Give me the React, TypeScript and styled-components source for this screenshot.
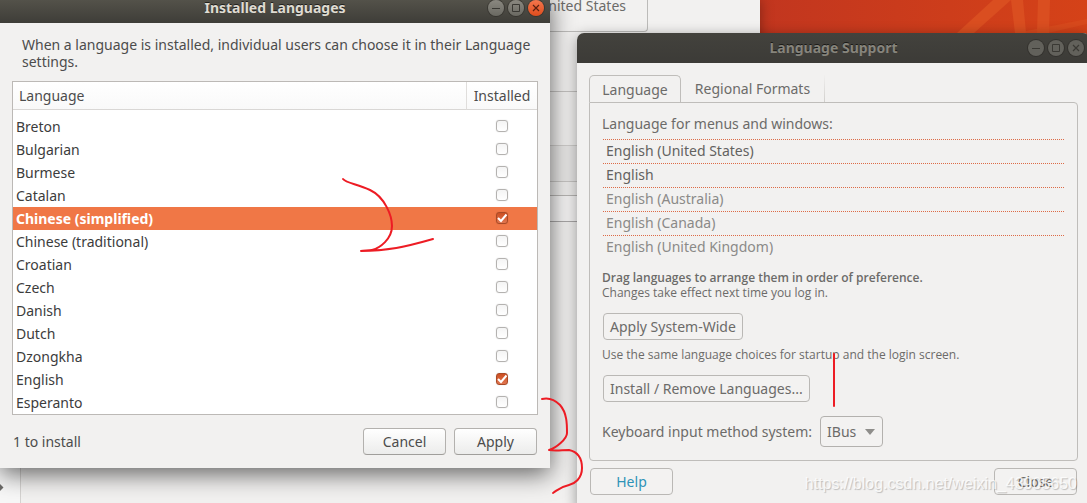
import React, { useState } from "react";
import styled, { createGlobalStyle, css } from "styled-components";

const GlobalStyle = createGlobalStyle`
  *, *::before, *::after { box-sizing: border-box; }
  html, body { margin: 0; height: 100%; overflow: hidden; }
  body {
    font-family: "Noto Sans", "Open Sans", sans-serif;
    font-size: 14px;
    line-height: 17px;
    color: #4c4c4c;
  }
  button, input, select { font: inherit; color: inherit; margin: 0; }
`;

const Desktop = styled.main`
  position: relative;
  min-height: 100vh;
  overflow: hidden;
  background: #c93a1b;
`;

const Wallpaper = styled.svg`
  position: absolute;
  top: 0;
  right: 0;
`;

/* Settings window behind the dialogs */
const SettingsWindow = styled.section`
  position: absolute;
  top: 0;
  bottom: 0;
  left: 0;
  width: 760px;
  display: flex;
  background: #f2f1f0;
  box-shadow: 0 0 12px rgba(0, 0, 0, 0.35);
`;

const SettingsNav = styled.nav`
  width: 21px;
  display: flex;
  flex-direction: column;
  justify-content: flex-end;
  padding-bottom: 8px;
  background: #f7f7f7;
  border-right: 1px solid #d5d3d1;
`;

const SettingsBody = styled.div`
  flex: 1;
  display: flex;
  flex-direction: column;
  align-items: flex-start;
`;

const RegionBox = styled.div`
  width: 627px;
  height: 32px;
  padding: 0 21px;
  line-height: 11px;
  text-align: right;
  color: #6c6b69;
  border: 1px solid #bcbbb9;
  border-top: 0;
  border-radius: 0 0 4px 0;
`;

const Band = styled.div<{ $height: number; $bg: string; $line: string }>`
  width: 627px;
  height: ${(p) => p.$height}px;
  background: ${(p) => p.$bg};
  border-bottom: 1px solid ${(p) => p.$line};
`;

/* Window chrome */
const Dialog = styled.section<{ $focused?: boolean }>`
  position: absolute;
  display: flex;
  flex-direction: column;
  background: #f2f1f0;
  border-radius: 7px 7px 0 0;
  ${(p) =>
    p.$focused
      ? css`
          top: -7px;
          left: 0;
          width: 550px;
          box-shadow: 0 6px 24px rgba(0, 0, 0, 0.6);
        `
      : css`
          top: 33px;
          left: 577px;
          right: -3px;
          min-height: 475px;
          color: #6c6b69;
          box-shadow: 0 3px 14px rgba(0, 0, 0, 0.4);
        `}
`;

const TitleBar = styled.header<{ $focused?: boolean }>`
  display: grid;
  grid-template-columns: 1fr auto 1fr;
  align-items: center;
  height: 30px;
  padding: 0 6px;
  border-radius: 7px 7px 0 0;
  background: ${(p) =>
    p.$focused
      ? "linear-gradient(#5a584f, #3e3d38)"
      : "linear-gradient(#43423d, #3c3b37)"};
  color: ${(p) => (p.$focused ? "#dfdbd2" : "#86847c")};
  text-shadow: 0 -1px 0 rgba(0, 0, 0, 0.6);
`;

const Title = styled.h1`
  grid-column: 2;
  margin: 0;
  font-size: 14px;
  line-height: 20px;
  font-weight: 700;
`;

const WindowButtons = styled.div`
  display: flex;
  justify-content: flex-end;
  gap: 4px;
`;

const WindowButton = styled.button<{ $tone: "dim" | "normal" | "close" }>`
  display: grid;
  place-items: center;
  width: 16px;
  height: 16px;
  padding: 0;
  border: 0;
  border-radius: 50%;
  color: ${(p) => (p.$tone === "close" ? "#5a2010" : "#3a3934")};
  background: ${(p) =>
    ({
      dim: "#62615b",
      normal: "linear-gradient(#8a8880, #6a6962)",
      close: "linear-gradient(#f4764d, #de4d1d)",
    })[p.$tone]};
  box-shadow: 0 0 0 1px rgba(40, 38, 34, 0.5);
`;

const Intro = styled.p`
  margin: 0;
  padding: 13px 16px 11px 22px;
`;

const ListFrame = styled.div`
  margin: 0 12px;
  background: #fff;
  border: 1px solid #bcb9b6;
`;

const LanguageTable = styled.table`
  width: 100%;
  border-collapse: separate;
  border-spacing: 0;
  color: #3c3c3c;
  th {
    height: 28px;
    padding: 0 6px;
    font-weight: 400;
    text-align: left;
    color: #4c4c4c;
    background: linear-gradient(#fff, #f9f9f9);
    border-bottom: 1px solid #d9d7d5;
  }
  th + th {
    width: 71px;
    padding: 0;
    text-align: center;
    border-left: 1px solid #e0dedc;
  }
  tbody::before {
    content: "";
    display: block;
    height: 5px;
  }
`;

const LanguageRow = styled.tr<{ $selected: boolean }>`
  ${(p) =>
    p.$selected &&
    css`
      background: #f07746;
      color: #fff;
      font-weight: 700;
    `}
  td {
    height: 23px;
    padding: 0 3px;
  }
  td + td {
    padding: 0;
    text-align: center;
  }
`;

const CheckLabel = styled.span`
  display: grid;
  place-items: center;
  height: 23px;
  padding-bottom: 1px;
  & > * {
    grid-area: 1 / 1;
  }
  svg {
    pointer-events: none;
  }
`;

const Check = styled.input`
  appearance: none;
  width: 12px;
  height: 12px;
  border: 1px solid #b4b2b0;
  border-radius: 3px;
  background: linear-gradient(#f4f4f4, #fff);
  box-shadow: 0 0 1px rgba(0, 0, 0, 0.25);
  &:checked {
    border-color: #a94a26;
    background: linear-gradient(#cc4f22, #e07650);
  }
`;

const Footer = styled.footer`
  display: flex;
  align-items: center;
  gap: 8px;
  padding: 13px 13px;
`;

const Status = styled.span`
  flex: 1;
`;

const Button = styled.button<{ $flat?: boolean; $wide?: boolean }>`
  height: 27px;
  padding: 0 6px;
  ${(p) => p.$wide && "width: 83px;"}
  border: 1px solid #b3b1ae;
  border-bottom-color: #a09e9b;
  border-radius: 4px;
  background: ${(p) =>
    p.$flat ? "#f3f2f1" : "linear-gradient(#fff, #ececeb)"};
  ${(p) => p.$flat && "border-color: #bab8b5;"}
`;

const HelpButton = styled(Button)`
  color: #2e93b8;
`;

const Tabs = styled.div`
  display: flex;
  margin: 12px 12px 0;
`;

const Tab = styled.button<{ $active?: boolean }>`
  height: 27px;
  padding: 0 12px;
  border: 1px solid transparent;
  background: transparent;
  ${(p) =>
    p.$active
      ? css`
          width: 92px;
          border-color: #bfbdba;
          border-bottom: 0;
          border-radius: 5px 5px 0 0;
        `
      : css`
          width: 144px;
          border-image: linear-gradient(#f2f1f0, #d0cecb) 1;
          border-width: 0 1px 0 0;
        `}
`;

const Notebook = styled.div`
  display: flex;
  flex-direction: column;
  align-items: flex-start;
  margin: 0 12px;
  padding: 12px 12px 13px;
  border: 1px solid #bfbdba;
  border-radius: 0 4px 4px 4px;
`;

const MenuLanguages = styled.ul`
  align-self: stretch;
  margin: 7px 1px 11px;
  padding: 0;
  list-style: none;
`;

const MenuLanguage = styled.li<{ $dim?: boolean }>`
  height: 24px;
  padding: 0 3px;
  line-height: 22px;
  border-top: 1px dotted #dd6b47;
  color: ${(p) => (p.$dim ? "#8b8a88" : "#636260")};
`;

const Hint = styled.p<{ $strong?: boolean }>`
  margin: 0;
  font-family: "Open Sans", "Noto Sans", sans-serif;
  font-size: 12px;
  line-height: 15px;
  font-weight: ${(p) => (p.$strong ? 600 : 400)};
`;

const ButtonRow = styled.div`
  padding: 13px 1px 7px;
`;

const FieldRow = styled.div`
  display: flex;
  align-items: center;
  gap: 8px;
  padding-top: 7px;
`;

const SelectBox = styled.span`
  display: grid;
  align-items: center;
  & > * {
    grid-area: 1 / 1;
  }
  svg {
    justify-self: end;
    margin-right: 8px;
    pointer-events: none;
  }
`;

const Select = styled.select`
  appearance: none;
  width: 63px;
  height: 31px;
  padding: 0 6px;
  border: 1px solid #b3b1ae;
  border-radius: 4px;
  background: #f3f2f1;
`;

const SupportFooter = styled.footer`
  display: flex;
  justify-content: space-between;
  padding: 7px 13px;
`;

const Ink = styled.svg`
  position: absolute;
  top: 0;
  left: 0;
  pointer-events: none;
`;

const Watermark = styled.span`
  position: absolute;
  right: 10px;
  bottom: 10px;
  font-family: "Liberation Sans", sans-serif;
  font-size: 16px;
  line-height: 18px;
  color: rgba(255, 255, 255, 0.8);
  text-shadow: 1px 1px 1px rgba(0, 0, 0, 0.22);
  pointer-events: none;
`;

const languages = [
  "Breton", "Bulgarian", "Burmese", "Catalan", "Chinese (simplified)",
  "Chinese (traditional)", "Croatian", "Czech", "Danish", "Dutch",
  "Dzongkha", "English", "Esperanto",
];

const menuLanguages = [
  { name: "English (United States)" },
  { name: "English" },
  { name: "English (Australia)", dim: true },
  { name: "English (Canada)", dim: true },
  { name: "English (United Kingdom)", dim: true },
];

function Controls({ focused }: { focused?: boolean }) {
  const tone = focused ? "normal" : "dim";
  return (
    <WindowButtons>
      <WindowButton $tone={tone} aria-label="Minimize">
        <svg width="16" height="16" fill="none" stroke="currentColor">
          <path d="M4 8.500h8" />
        </svg>
      </WindowButton>
      <WindowButton $tone={tone} aria-label="Maximize">
        <svg width="16" height="16" fill="none" stroke="currentColor">
          <path d="M4.500 4.500h7v7h-7z" />
        </svg>
      </WindowButton>
      <WindowButton $tone={focused ? "close" : "dim"} aria-label="Close window">
        <svg width="16" height="16" fill="none" stroke="currentColor" strokeWidth="1.2">
          <path d="M5 5l6 6M11 5l-6 6" />
        </svg>
      </WindowButton>
    </WindowButtons>
  );
}

export default function App() {
  const [installed, setInstalled] = useState(["Chinese (simplified)", "English"]);
  const [selected, setSelected] = useState("Chinese (simplified)");
  const toggle = (name: string) =>
    setInstalled((list) =>
      list.includes(name) ? list.filter((n) => n !== name) : [...list, name],
    );

  return (
    <>
      <GlobalStyle />
      <Desktop>
        <Wallpaper width="327" height="33" viewBox="760 0 327 33" aria-hidden="true">
          <defs>
            <linearGradient id="sky">
              <stop offset="0" stopColor="#c2361f" />
              <stop offset="1" stopColor="#d54218" />
            </linearGradient>
          </defs>
          <path d="M760 0h327v33H760z" fill="url(#sky)" />
          <g fill="#da4e20">
            <path d="M993 0h18l-37 33h-17z" />
            <path d="M1011 0h12l3 33h-11z" />
            <path d="M1038 0h12l-1 33h-12z" />
            <path d="M1026 31l61-12v5l-39 9h-22z" opacity=".6" />
          </g>
        </Wallpaper>

        <SettingsWindow aria-label="Settings">
          <SettingsNav>
            <svg width="4" height="15" aria-hidden="true">
              <path d="M0 4l3.500 3.500L0 11z" fill="#6c6b69" />
            </svg>
          </SettingsNav>
          <SettingsBody>
            <RegionBox>United States</RegionBox>
            <Band $height={60} $bg="#f2f1f0" $line="#c4c2c0" />
            <Band $height={54} $bg="#f2f1f0" $line="#d0cecc" />
            <Band $height={36} $bg="#e9e8e7" $line="#c8c6c4" />
            <Band $height={14} $bg="#efeeed" $line="#b8b6b4" />
            <Band $height={26} $bg="#f6f5f5" $line="#aaa8a8" />
          </SettingsBody>
        </SettingsWindow>

        <Dialog aria-label="Language Support">
          <TitleBar>
            <Title>Language Support</Title>
            <Controls />
          </TitleBar>
          <Tabs role="tablist">
            <Tab role="tab" aria-selected="true" $active>Language</Tab>
            <Tab role="tab" aria-selected="false">Regional Formats</Tab>
          </Tabs>
          <Notebook role="tabpanel">
            <span>Language for menus and windows:</span>
            <MenuLanguages>
              {menuLanguages.map((l) => (
                <MenuLanguage key={l.name} $dim={l.dim}>{l.name}</MenuLanguage>
              ))}
            </MenuLanguages>
            <Hint $strong>Drag languages to arrange them in order of preference.</Hint>
            <Hint>Changes take effect next time you log in.</Hint>
            <ButtonRow>
              <Button $flat>Apply System-Wide</Button>
            </ButtonRow>
            <Hint>Use the same language choices for startup and the login screen.</Hint>
            <ButtonRow>
              <Button $flat>Install / Remove Languages...</Button>
            </ButtonRow>
            <FieldRow>
              <label htmlFor="input-method">Keyboard input method system:</label>
              <SelectBox>
                <Select id="input-method" defaultValue="IBus">
                  <option>IBus</option>
                </Select>
                <svg width="10" height="6" aria-hidden="true">
                  <path d="M0 0h10L5 6z" fill="#8f8e8b" />
                </svg>
              </SelectBox>
            </FieldRow>
          </Notebook>
          <SupportFooter>
            <HelpButton $flat $wide>Help</HelpButton>
            <Button $flat $wide>Close</Button>
          </SupportFooter>
        </Dialog>

        <Dialog $focused aria-label="Installed Languages">
          <TitleBar $focused>
            <Title>Installed Languages</Title>
            <Controls focused />
          </TitleBar>
          <Intro>
            When a language is installed, individual users can choose it in their Language
            settings.
          </Intro>
          <ListFrame>
            <LanguageTable>
              <thead>
                <tr>
                  <th scope="col">Language</th>
                  <th scope="col">Installed</th>
                </tr>
              </thead>
              <tbody>
                {languages.map((name) => (
                  <LanguageRow
                    key={name}
                    $selected={name === selected}
                    onClick={() => setSelected(name)}
                  >
                    <td>{name}</td>
                    <td>
                      <CheckLabel>
                        <Check
                          type="checkbox"
                          aria-label={name}
                          checked={installed.includes(name)}
                          onChange={() => toggle(name)}
                        />
                        {installed.includes(name) && (
                          <svg width="12" height="12" fill="none" stroke="#fff" strokeWidth="2">
                            <path d="M2 6l3 3 5.500-6.500" />
                          </svg>
                        )}
                      </CheckLabel>
                    </td>
                  </LanguageRow>
                ))}
              </tbody>
            </LanguageTable>
          </ListFrame>
          <Footer>
            <Status>1 to install</Status>
            <Button $wide>Cancel</Button>
            <Button $wide>Apply</Button>
          </Footer>
        </Dialog>

        <Watermark>https://blog.csdn.net/weixin_43905650</Watermark>
        <Ink width="1087" height="503" fill="none" stroke="#ed1c24" strokeWidth="2" strokeLinecap="round" strokeLinejoin="round" aria-hidden="true">
          <path d="M343 179c3 4 14 5 27 11 15 7 22 26 22 36 0 13-12 22-20 24-4 1-8 0-11 1 26 0 44-4 72-12" />
          <path d="M542 399c8-2 13 1 18 6 7 8 7 19 7 28 0 6-11 15-18 17 7 1 13 0 20 0 9 2 13 9 13 18 0 11-8 16-13 17-9 2-10 4-16 8" />
          <path d="M834 354v52" />
        </Ink>
      </Desktop>
    </>
  );
}
